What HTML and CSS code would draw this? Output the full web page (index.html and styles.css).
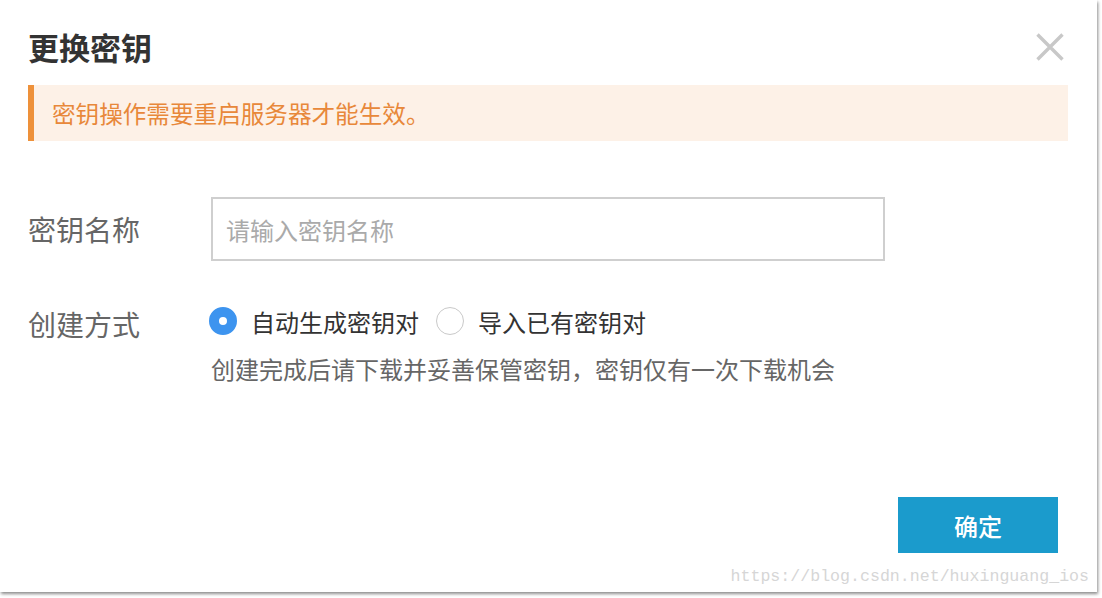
FILE: index.html
```html
<!DOCTYPE html>
<html lang="zh">
<head>
<meta charset="utf-8">
<title>更换密钥</title>
<link rel="stylesheet" href="styles.css">
</head>
<body>
<div class="dialog">
  <div class="header">
    <h1 class="title">更换密钥</h1>
    <svg class="close" width="28" height="28" viewBox="0 0 28 28"><path d="M1.5 1.5 L26.5 26.5 M26.5 1.5 L1.5 26.5" stroke="#c8c8c8" stroke-width="3.4" stroke-linecap="butt"/></svg>
  </div>
  <div class="alert">密钥操作需要重启服务器才能生效。</div>
  <div class="form">
    <div class="row row-name">
      <div class="label">密钥名称</div>
      <div class="input">请输入密钥名称</div>
    </div>
    <div class="row row-mode">
      <div class="label">创建方式</div>
      <div class="field">
        <div class="radios">
          <span class="radio checked"></span><span class="opt">自动生成密钥对</span>
          <span class="radio"></span><span class="opt">导入已有密钥对</span>
        </div>
        <div class="hint">创建完成后请下载并妥善保管密钥，密钥仅有一次下载机会</div>
      </div>
    </div>
  </div>
  <div class="footer">
    <button class="btn">确定</button>
  </div>
  <div class="watermark">https://blog.csdn.net/huxinguang_ios</div>
</div>
</body>
</html>
```
FILE: styles.css
```css
html, body { margin: 0; padding: 0; background: #ffffff; }
body { width: 1102px; height: 598px; overflow: hidden; font-family: "Noto Sans CJK SC", "Noto Sans", sans-serif; }
.dialog {
  position: relative;
  width: 1097px;
  height: 592px;
  background: #fff;
  box-shadow: 1px 2px 3px rgba(0,0,0,0.45);
  display: flex;
  flex-direction: column;
  box-sizing: border-box;
}
.header {
  display: flex;
  justify-content: space-between;
  align-items: flex-start;
  padding: 28px 33px 0 28px;
  height: 85px;
  flex: none;
  box-sizing: border-box;
}
.title {
  margin: 0;
  font-size: 31px;
  line-height: 38px;
  font-weight: 700;
  color: #333;
}
.close { margin-top: 5px; }
.alert {
  flex: none;
  margin: 0 29px 0 28px;
  height: 56px;
  box-sizing: border-box;
  background: #fdf1e7;
  border-left: 6px solid #ee913a;
  padding-left: 18px;
  display: flex;
  align-items: center;
  color: #e8883a;
  font-size: 23.6px;
}
.form { padding: 56px 0 0 28px; }
.row { display: flex; }
.label {
  width: 183px;
  flex: none;
  font-size: 28px;
  color: #666;
}
.row-name { align-items: center; }
.input {
  width: 674px;
  height: 64px;
  box-sizing: border-box;
  border: 2px solid #cfcfcf;
  padding-left: 13px;
  display: flex;
  align-items: center;
  font-size: 24px;
  color: #aaa;
}
.row-mode { margin-top: 41px; }
.row-mode .label { line-height: 38px; margin-top: 3px; }
.field { margin-left: -2px; }
.radios { display: flex; align-items: center; height: 38px; }
.radio {
  width: 28px;
  height: 28px;
  box-sizing: border-box;
  border-radius: 50%;
  border: 1px solid #c9c9c9;
  background: #fff;
  flex: none;
}
.radio.checked {
  border: 10px solid #3d94ef;
  background: #fff;
}
.opt {
  font-size: 24px;
  color: #333;
  margin-left: 14px;
  margin-right: 17px;
}
.hint {
  margin-top: 13px;
  margin-left: 2px;
  font-size: 24px;
  color: #666;
  line-height: 32px;
}
.footer {
  margin-top: auto;
  display: flex;
  justify-content: flex-end;
  padding: 0 39px 39px 0;
}
.btn {
  width: 160px;
  height: 56px;
  border: none;
  background: #1b9bcc;
  color: #fff;
  font-family: "Noto Sans CJK SC", sans-serif;
  font-size: 24px;
  font-weight: 500;
  padding: 0;
}
.watermark {
  position: absolute;
  right: 8px;
  bottom: 5px;
  font-family: "Liberation Mono", "DejaVu Sans Mono", monospace;
  font-size: 16.6px;
  color: #d6d6d6;
  line-height: 20px;
}
```
